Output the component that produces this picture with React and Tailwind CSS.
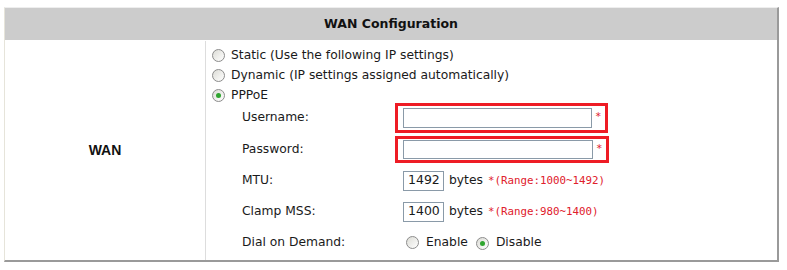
import React from 'react';

const Radio = ({ checked }) => (
  <span className="inline-flex w-[13px] h-[13px] shrink-0 items-center justify-center rounded-full border border-[#8c8c8c] bg-gradient-to-br from-[#dcdcd6] to-white">
    {checked && <span className="w-[5px] h-[5px] rounded-full bg-[#2fa52f]" />}
  </span>
);

const RadioRow = ({ checked, children }) => (
  <div className="h-[20px] flex items-center gap-[6px]">
    <Radio checked={checked} />
    <span>{children}</span>
  </div>
);

const Field = ({ label, children }) => (
  <div className="flex items-center">
    <div className="w-[183px] pl-[30px]">{label}</div>
    {children}
  </div>
);

const Required = ({ children }) => (
  <span className="text-[#e0202c] text-[10.8px] font-['DejaVu_Sans_Mono',monospace]">*{children}</span>
);

export default function App() {
  return (
    <div className="w-[787px] h-[270px] bg-white pt-[7px] pl-[4px] text-[#1a1a1a] font-['DejaVu_Sans',sans-serif] text-[12.3px]">
      <div className="w-[775px] border-t border-t-[#eeeeee] border-l border-l-[#e6e4da] border-r-2 border-r-[#9a9a9a] border-b-2 border-b-[#9a9a9a]">
        <div className="h-[33px] bg-[#cccccc] border-b border-white flex items-center justify-center font-bold text-[12.5px] text-[#111]">
          WAN Configuration
        </div>
        <div className="flex h-[219px]">
          <div className="w-[201px] border-r border-[#dddddd] flex items-center justify-center font-['Liberation_Sans',sans-serif] font-bold text-[14px] text-[#111]">
            WAN
          </div>
          <div className="flex-1 pl-[6px] pt-[4px]">
            <RadioRow>Static (Use the following IP settings)</RadioRow>
            <RadioRow>Dynamic (IP settings assigned automatically)</RadioRow>
            <RadioRow checked>PPPoE</RadioRow>
            <div className="flex flex-col">
              <div className="h-[31px] flex items-center mt-[-3px]">
                <Field label="Username:">
                  <div className="w-[213px] h-[30px] border-[3px] border-[#ee1c25] flex items-center pl-[5px] gap-[3px]">
                    <span className="w-[189px] h-[20px] border border-[#8a9aa8] bg-white" />
                    <Required />
                  </div>
                </Field>
              </div>
              <div className="h-[31px] flex items-center pt-[2px]">
                <Field label="Password:">
                  <div className="w-[214px] h-[27px] border-[3px] border-[#ee1c25] flex items-center pl-[5px] gap-[3px]">
                    <span className="w-[190px] h-[19px] border border-[#8a9aa8] bg-white" />
                    <Required />
                  </div>
                </Field>
              </div>
              <div className="h-[31px] flex items-center mt-[1px]">
                <Field label="MTU:">
                  <div className="flex items-center pl-[8px]">
                    <span className="w-[41px] h-[20px] border border-[#8a9aa8] flex items-center pl-[4px] text-[12.5px]">1492</span>
                    <span className="ml-[5px]">bytes</span>
                    <span className="ml-[5px]"><Required>(Range:1000~1492)</Required></span>
                  </div>
                </Field>
              </div>
              <div className="h-[31px] flex items-center">
                <Field label="Clamp MSS:">
                  <div className="flex items-center pl-[8px]">
                    <span className="w-[41px] h-[20px] border border-[#8a9aa8] flex items-center pl-[4px] text-[12.5px]">1400</span>
                    <span className="ml-[5px]">bytes</span>
                    <span className="ml-[5px]"><Required>(Range:980~1400)</Required></span>
                  </div>
                </Field>
              </div>
              <div className="h-[31px] flex items-center">
                <Field label="Dial on Demand:">
                  <div className="flex items-center pl-[11px] gap-[7px]">
                    <Radio />
                    <span>Enable</span>
                    <span className="ml-[1px]"><Radio checked /></span>
                    <span>Disable</span>
                  </div>
                </Field>
              </div>
            </div>
          </div>
        </div>
      </div>
    </div>
  );
}
